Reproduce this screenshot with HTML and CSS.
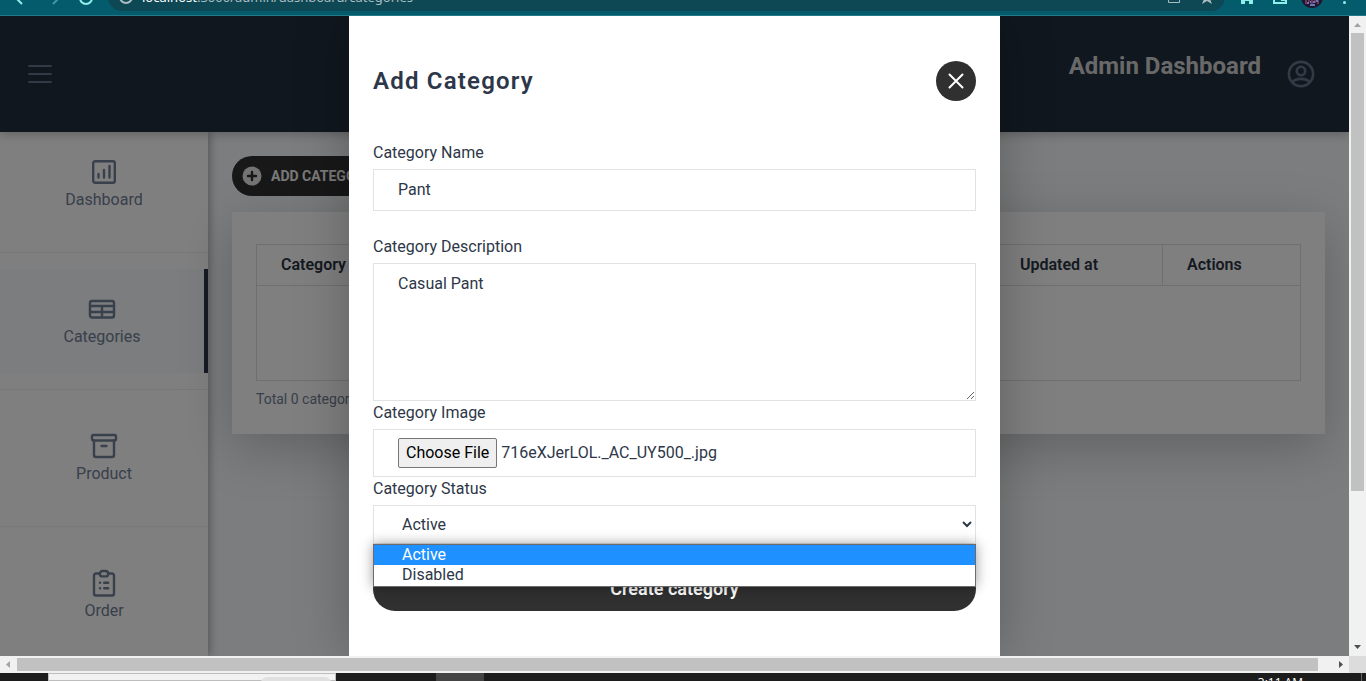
FILE: index.html
```html
<!DOCTYPE html>
<html lang="en">
<head>
<meta charset="utf-8">
<title>Admin Dashboard</title>
<link rel="stylesheet" href="styles.css">
</head>
<body>
<div class="browser-bar">
  <svg class="bar-icons" width="108" height="24" viewBox="0 0 108 24" fill="none" stroke="#8ff0ea" stroke-width="2">
    <path d="M22 12l-7-7 7-7"/>
    <path d="M53 12l7-7-7-7" stroke="#3f9aa3"/>
    <path d="M92 6a6 6 0 0 1-12 0"/>
  </svg>
  <div class="address">
    <svg width="16" height="16" viewBox="0 0 16 16" fill="none" stroke="#a9bcc0" stroke-width="2"><circle cx="8" cy="8" r="6"/><path d="M8 7v4"/></svg>
    <span class="url"><span class="host">localhost</span>:3000/admin/dashboard/categories</span>
    <svg width="80" height="16" viewBox="0 0 80 16" fill="none" stroke="#a9bcc0" stroke-width="1">
      <path d="M1 10h3M7 10h3"/>
      <path d="M31.500 4v9.500h11V9M35 10l5-4"/>
      <path d="M70 2l2 5 5 0-4 3 2 5-5-3-5 3 2-5-4-3 5 0z" fill="#a9bcc0" stroke="none"/>
    </svg>
  </div>
  <svg class="bar-icons" width="141" height="24" viewBox="0 0 141 24">
    <path d="M14 7l8-6 8 6h-2v5h-4V9h-4v3h-4V7z" fill="#8ff0ea"/>
    <path d="M49 1h12v10H49z" fill="none" stroke="#8ff0ea" stroke-width="2"/><path d="M56 2h5v7h-5z" fill="#8ff0ea"/>
    <circle cx="87" cy="5" r="11" fill="#1b1830"/>
    <path d="M81 8v4M84 7v3M87 8v5M90 7v4M93 8v4" stroke="#b5567a" stroke-width="1"/><path d="M82 11h2M85 10h1M88 10h2M91 9h2M85 13h5" stroke="#6f72b8" stroke-width="2"/>
    <circle cx="119.500" cy="10.500" r="1.500" fill="#8ff0ea"/>
  </svg>
</div>

<div class="viewport">
  <div class="page">
    <header class="topbar">
      <button class="icon-button" aria-label="Menu">
        <svg width="24" height="24" viewBox="0 0 24 24" stroke="#68748a" stroke-width="2" stroke-linecap="round"><path d="M1 4h22M1 12h22M1 20h22"/></svg>
      </button>
      <div class="account">
        <h1>Admin Dashboard</h1>
        <button class="icon-button" aria-label="Account">
          <svg width="28" height="28" viewBox="0 0 28 28" fill="none" stroke="#68748a" stroke-width="2.600"><circle cx="14" cy="14" r="12.1"/><circle cx="14" cy="11" r="4.2"/><path d="M5 22.500c2-2.500 5-3.600 9-3.600s7 1.100 9 3.600"/></svg>
        </button>
      </div>
    </header>
    <div class="body">
      <nav class="sidebar">
        <div class="nav-item"><a href="#dashboard">
          <svg width="24" height="24" viewBox="0 0 24 24"><rect x="1.200" y="1.200" width="21.600" height="21.600" rx="2"/><path d="M6.500 14v3.500M12 10v7.500M17.500 6v11.500"/></svg>
          <span>Dashboard</span></a></div>
        <div class="nav-item"><a class="active" href="#categories">
          <svg width="28" height="28" viewBox="0 0 28 28"><rect x="2" y="6" width="24" height="16.500" rx="2"/><path d="M2 11h24M2 17h24M14 11v11"/></svg>
          <span>Categories</span></a></div>
        <div class="nav-item"><a href="#product">
          <svg width="28" height="28" viewBox="0 0 28 28"><rect x="2" y="3" width="24" height="5.500" rx="1.500"/><path d="M4 8.500V23a2 2 0 0 0 2 2h16a2 2 0 0 0 2-2V8.500M11.500 14h5"/></svg>
          <span>Product</span></a></div>
        <div class="nav-item"><a href="#order">
          <svg width="28" height="28" viewBox="0 0 28 28"><path d="M9 4.500H6a2 2 0 0 0-2 2V24.500a2 2 0 0 0 2 2h16a2 2 0 0 0 2-2V6.500a2 2 0 0 0-2-2h-3"/><rect x="9.800" y="2" width="8.400" height="5.400" rx="2.700"/><path d="M10 13.700h.1M14.200 13.700h4M10 19.200h.1M14.200 19.200h4"/></svg>
          <span>Order</span></a></div>
      </nav>
      <main class="content">
        <button class="add-button">
          <svg width="20" height="20" viewBox="0 0 20 20"><circle cx="10" cy="10" r="9.500" fill="#e6e6e6"/><path d="M10 6v8M6 10h8" stroke="#303030" stroke-width="2.400" stroke-linecap="round"/></svg>
          ADD CATEGORY
        </button>
        <section class="card">
          <table>
            <thead><tr><th class="col-name">Category</th><th></th><th class="col-date">Updated at</th><th class="col-actions">Actions</th></tr></thead>
            <tbody><tr><td colspan="4"></td></tr></tbody>
          </table>
          <p>Total 0 categories</p>
        </section>
      </main>
    </div>

    <div class="overlay">
      <div class="modal" role="dialog" aria-labelledby="modal-title">
        <div class="modal-head">
          <h2 id="modal-title">Add Category</h2>
          <button class="close" aria-label="Close">
            <svg width="24" height="24" viewBox="0 0 24 24" stroke="#fff" stroke-width="2" stroke-linecap="round"><path d="M5.500 5.500l13 13M18.500 5.500l-13 13"/></svg>
          </button>
        </div>
        <form>
          <div class="field spaced">
            <label for="name">Category Name</label>
            <input class="control" id="name" type="text" value="Pant">
          </div>
          <div class="field">
            <label for="description">Category Description</label>
            <textarea class="control" id="description">Casual Pant</textarea>
          </div>
          <div class="field">
            <label for="image">Category Image</label>
            <div class="control file">
              <input class="visually-hidden" id="image" type="file">
              <label class="file-button" for="image">Choose File</label>
              <span>716eXJerLOL._AC_UY500_.jpg</span>
            </div>
          </div>
          <div class="field">
            <label for="status">Category Status</label>
            <div class="select-wrap">
              <select class="control" id="status"><option>Active</option><option>Disabled</option></select>
              <ul class="options" role="listbox" aria-label="Category Status">
                <li role="option" aria-selected="true">Active</li>
                <li role="option" aria-selected="false">Disabled</li>
              </ul>
            </div>
          </div>
          <button class="submit" type="button">Create category</button>
        </form>
      </div>
    </div>
  </div>
  <div class="scroll-y">
    <svg width="17" height="17" viewBox="0 0 17 17"><path d="M5 11l3.500-4 3.500 4z" fill="#a3a3a3"/></svg>
    <div class="thumb-y"></div>
    <div class="rest-y"></div>
    <svg width="17" height="17" viewBox="0 0 17 17"><path d="M5 6h7l-3.500 4z" fill="#505050"/></svg>
  </div>
</div>
<div class="scroll-x">
  <svg width="17" height="17" viewBox="0 0 17 17"><path d="M10 5v7L6 8.500z" fill="#a3a3a3"/></svg>
  <div class="thumb-x"></div>
  <div class="rest-x"></div>
  <svg width="17" height="17" viewBox="0 0 17 17"><path d="M7 5v7l4-3.500z" fill="#505050"/></svg>
  <div class="corner"></div>
</div>
<footer class="taskbar">
  <div class="search"><div class="search-art"></div></div>
  <div class="task"></div>
  <time class="clock">3:11 AM</time>
  <div class="show-desktop"></div>
</footer>
</body>
</html>
```

FILE: styles.css
```css
* { box-sizing: border-box; }
body {
  margin: 0;
  height: 100vh;
  display: flex;
  flex-direction: column;
  overflow: hidden;
  font-family: Roboto, "Liberation Sans", sans-serif;
  font-size: 16px;
  line-height: 24px;
  color: #2d3748;
}
h1, h2, p, ul { margin: 0; padding: 0; }
svg { display: block; flex: none; }
button { font-family: inherit; border: 0; cursor: pointer; }
.icon-button { background: none; padding: 0; }

.browser-bar {
  flex: none;
  height: 16px;
  display: flex;
  align-items: flex-end;
  overflow: hidden;
  background: #045b6c;
  border-bottom: 1px solid #23788a;
}
.bar-icons { align-self: flex-start; margin-top: -8px; }
.address {
  flex: 1;
  height: 28px;
  margin-bottom: 4px;
  padding: 0 8px 6px 10px;
  display: flex;
  align-items: flex-end;
  gap: 8px;
  border-radius: 14px;
  background: #0e4855;
}
.url {
  flex: 1;
  font-family: "Noto Sans", "Open Sans", sans-serif;
  font-size: 13px;
  line-height: 16px;
  color: #a9bcc0;
}
.host { color: #fff; }

.viewport { flex: 1; min-height: 0; display: flex; }
.page {
  position: relative;
  flex: 1;
  min-width: 0;
  display: flex;
  flex-direction: column;
  overflow: hidden;
  background: #f7fafc;
}
.topbar {
  position: relative;
  z-index: 1;
  flex: none;
  height: 116px;
  padding: 0 34px 0 28px;
  display: flex;
  align-items: center;
  justify-content: space-between;
  background: #202e3d;
  box-shadow: 0 2px 10px rgba(0, 0, 0, .25);
}
.account { display: flex; gap: 26px; align-items: center; }
.account h1 {
  padding-bottom: 16px;
  font-size: 24px;
  line-height: 32px;
  font-weight: 700;
  color: #d2d2d2;
}
.body { flex: 1; min-height: 0; display: flex; }
.sidebar {
  flex: none;
  width: 208px;
  background: #fff;
  box-shadow: 2px 0 8px rgba(0, 0, 0, .3);
}
.nav-item { padding-bottom: 16px; margin-bottom: 16px; border-bottom: 1px solid #edf0f2; }
.nav-item a {
  height: 104px;
  padding: 24px 0;
  display: grid;
  grid-template-rows: 32px 24px;
  place-items: center;
  color: #718096;
  text-decoration: none;
}
.nav-item .active { background: #f7fafc; border-right: 4px solid #2d3748; }
.nav-item svg { fill: none; stroke: #718096; stroke-width: 2.4; stroke-linecap: round; stroke-linejoin: round; }

.content { flex: 1; min-width: 0; padding: 24px; }
.add-button {
  height: 40px;
  padding: 0 24px 0 10px;
  display: flex;
  align-items: center;
  gap: 9px;
  border-radius: 20px;
  background: #303030;
  color: #f2f2f2;
  font-size: 14px;
  font-weight: 700;
}
.card {
  margin-top: 16px;
  padding: 32px 24px 24px;
  background: #fff;
  box-shadow: 0 14px 50px rgba(0, 0, 0, .22);
}
table { width: 100%; border-collapse: collapse; table-layout: fixed; }
th, td { border: 1px solid #dcdfe3; }
th {
  height: 41px;
  padding: 0 24px;
  text-align: left;
  font-weight: 600;
  color: #2a3342;
}
td { height: 95px; }
.col-name { width: 240px; }
.col-date { width: 167px; }
.col-actions { width: 138px; }
.card p { padding-top: 8px; font-size: 14px; line-height: 21px; color: #718096; }

.overlay {
  position: absolute;
  inset: 0;
  z-index: 2;
  display: flex;
  justify-content: center;
  background: rgba(0, 0, 0, .5);
}
.modal {
  width: 100%;
  max-width: 651px;
  padding: 45px 24px;
  background: #fff;
  box-shadow: 0 0 50px rgba(0, 0, 0, .25);
}
.modal-head {
  display: flex;
  align-items: center;
  justify-content: space-between;
  margin-bottom: 40px;
}
.modal-head h2 { font-size: 24px; line-height: 32px; font-weight: 600; letter-spacing: .05em; }
.close {
  width: 40px;
  height: 40px;
  padding: 0;
  display: grid;
  place-items: center;
  border-radius: 50%;
  background: #303030;
}
.field > label { display: block; height: 28px; line-height: 24px; }
.spaced { margin-bottom: 24px; }
.control {
  display: block;
  width: 100%;
  padding: 8px 24px;
  border: 1px solid #e0e2e6;
  border-radius: 0;
  background: #fff;
  color: #2d3748;
  font: inherit;
}
textarea.control { height: 138px; resize: vertical; }
.file { display: flex; align-items: center; gap: 4px; height: 48px; }
.file-button {
  padding: 2px 7px;
  border: 1px solid #767676;
  border-radius: 2px;
  background: #efefef;
  color: #000;
}
.visually-hidden { position: absolute; width: 1px; height: 1px; opacity: 0; }
.select-wrap { position: relative; margin-bottom: 23px; }
select.control { height: 39px; padding: 0 4px 0 24px; }
.options {
  position: absolute;
  top: 100%;
  left: 0;
  right: 0;
  list-style: none;
  border: 1px solid #6b6b6b;
  background: #fff;
  box-shadow: 0 0 12px rgba(0, 0, 0, .4);
}
.options li { padding: 0 28px; height: 20px; line-height: 19px; }
.options li:last-child { height: 21px; }
.options [aria-selected="true"] { background: #1e90ff; color: #fff; }
.submit {
  width: 100%;
  height: 44px;
  padding: 0 0 2px;
  border-radius: 22px;
  background: #303030;
  color: #fff;
  font-size: 18px;
  font-weight: 600;
}

.scroll-y { flex: none; width: 17px; display: flex; flex-direction: column; background: #f1f1f1; }
.thumb-y { flex: 458; margin: 0 2px; background: #c1c1c1; }
.rest-y { flex: 148; }
.scroll-x { flex: none; height: 17px; display: flex; background: #f1f1f1; }
.thumb-x { flex: 1301; margin: 2px 0; background: #c1c1c1; }
.rest-x { flex: 14; }
.corner { width: 17px; background: #dcdcdc; }

.taskbar { flex: none; height: 8px; padding-left: 48px; display: flex; overflow: hidden; background: #1c1c1c; }
.search {
  width: 288px;
  padding: 3px 3px 0;
  display: flex;
  justify-content: flex-end;
  border: 1px solid #bdbdbd;
  background: #f2f2f2;
}
.search-art { width: 72px; height: 16px; border-radius: 8px; background: #e0e0e0; }
.task { width: 48px; margin-left: 100px; background: #444; }
.clock {
  margin: 2px 58px 0 auto;
  font-family: "Open Sans", "Noto Sans", sans-serif;
  font-size: 12px;
  line-height: 16px;
  color: #fff;
}
.show-desktop { width: 5px; border-left: 1px solid #666; }
```
